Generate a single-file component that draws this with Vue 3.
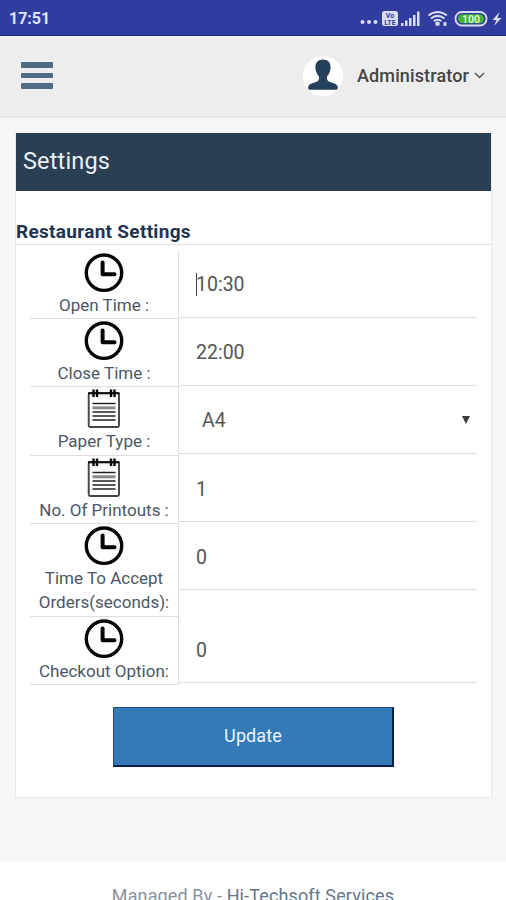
<script setup>
import { ref } from 'vue';

const rows = ref([
  { icon: 'clock', label: 'Open Time :', value: '10:30', focused: true },
  { icon: 'clock', label: 'Close Time :', value: '22:00' },
  { icon: 'paper', label: 'Paper Type :', value: 'A4', select: true },
  { icon: 'paper', label: 'No. Of Printouts :', value: '1' },
  { icon: 'clock', label: 'Time To Accept Orders(seconds):', value: '0', tall: true },
  { icon: 'clock', label: 'Checkout Option:', value: '0' }
]);
</script>

<template>
  <div class="page">
    <div class="status-bar">
      <span class="time">17:51</span>
      <svg class="status-icons" width="146" height="20" viewBox="0 0 146 20">
        <g fill="#d9dcf5">
          <circle cx="2.500" cy="13" r="2" />
          <circle cx="9" cy="13" r="2" />
          <circle cx="15.500" cy="13" r="2" />
          <rect x="22" y="2" width="16" height="15" rx="2.500" />
          <rect x="41" y="14" width="2.500" height="3" />
          <rect x="45" y="11.500" width="2.500" height="5.500" />
          <rect x="49" y="9" width="2.500" height="8" />
          <rect x="53" y="6" width="2.500" height="11" />
          <rect x="57" y="2.500" width="2.500" height="14.500" />
          <circle cx="77.500" cy="14.700" r="2.300" />
          <rect x="83.500" y="13" width="3" height="4" rx="1" />
          <path d="M139.500 3 L132.500 11 H136.500 L134 17 L141.500 9 H137.500 Z" />
        </g>
        <text class="volte" x="30" y="9">Vo</text>
        <text class="volte" x="30" y="15.500">LTE</text>
        <g fill="none" stroke="#d9dcf5" stroke-width="2">
          <path d="M68.500 6.500 Q77.500 -0.500 87 6.500" />
          <path d="M71 9.500 Q77.500 4.200 84.500 9.500" />
          <path d="M73.800 12.300 Q77.500 9.300 81.500 12.300" />
        </g>
        <rect x="95.500" y="3" width="31" height="13.500" rx="6.500" fill="none" stroke="#d9dcf5" stroke-width="1.800" />
        <rect x="98" y="5.300" width="26" height="9" rx="4.500" fill="#43b52f" />
        <text class="battery" x="111" y="13.500">100</text>
      </svg>
    </div>

    <header class="header">
      <div class="menu">
        <span></span>
        <span></span>
        <span></span>
      </div>
      <div class="user">
        <svg class="avatar" width="40" height="40" viewBox="0 0 40 40">
          <circle cx="20" cy="20" r="20" fill="#fff" />
          <path
            fill="#24405a"
            d="M20 3.500 C24.800 3.500 27.600 6.500 27.600 11 C27.600 15 26.300 18 24 20.500 C23.500 23.500 24.500 25.200 27 26 C31.500 27.300 34.700 28.300 34.900 31.500 C34.900 33 34 33.800 32.500 33.800 H7.500 C6 33.800 5.100 33 5.100 31.500 C5.300 28.300 8.500 27.300 13 26 C15.500 25.200 16.500 23.500 16 20.500 C13.700 18 12.400 15 12.400 11 C12.400 6.500 15.200 3.500 20 3.500 Z"
          />
        </svg>
        <span class="user-name">Administrator</span>
        <svg width="11" height="7" viewBox="0 0 11 7">
          <path d="M1 1 L5.500 5.500 L10 1" fill="none" stroke="#555" stroke-width="1.500" />
        </svg>
      </div>
    </header>

    <main class="panel">
      <h2 class="panel-title">Settings</h2>
      <h3 class="section-title">Restaurant Settings</h3>

      <div class="form">
        <div v-for="row in rows" :key="row.label" class="row" :class="{ tall: row.tall }">
          <div class="label">
            <svg v-if="row.icon === 'clock'" width="40" height="40" viewBox="0 0 40 40">
              <circle cx="20" cy="19.700" r="17.700" fill="none" stroke="#050505" stroke-width="3.400" />
              <path
                d="M18.600 9.500 V21.300 H30.500"
                fill="none"
                stroke="#050505"
                stroke-width="4"
                stroke-linecap="round"
                stroke-linejoin="round"
              />
            </svg>
            <svg v-else width="40" height="40" viewBox="0 0 40 40">
              <rect x="4.700" y="4" width="30.300" height="34" rx="1.500" fill="none" stroke="#444" stroke-width="1.900" />
              <path d="M4 4.300 H35.500" stroke="#111" stroke-width="2" />
              <path d="M9.500 0.500 V8 M13 0.500 V8 M27 0.500 V8 M30.500 0.500 V8" stroke="#050505" stroke-width="2.400" />
              <path d="M8.500 14.500 H31.500 M8.500 23 H31.500 M8.500 27 H31.500 M8.500 31 H31.500" stroke="#222" stroke-width="1.500" />
              <path d="M8.500 18.800 H31.500" stroke="#888" stroke-width="3" />
            </svg>
            <span>{{ row.label }}</span>
          </div>
          <div class="field" :class="{ select: row.select }">
            <i v-if="row.focused" class="caret"></i>
            <span>{{ row.value }}</span>
            <svg v-if="row.select" class="arrow" width="8" height="9" viewBox="0 0 8 9">
              <path d="M0 0 H8 L4 8 Z" fill="#3c3c3c" />
            </svg>
          </div>
        </div>
      </div>

      <button class="update">Update</button>
    </main>

    <footer class="footer">Managed By - <span>Hi-Techsoft Services</span></footer>
  </div>
</template>

<style>
body {
  overflow: hidden;
}
</style>

<style scoped>
.page {
  display: flex;
  flex-direction: column;
  height: 900px;
  overflow: hidden;
  background: #f6f6f6;
  font-family: Roboto, "Liberation Sans", sans-serif;
  color: #4b5666;
}

.status-bar {
  display: flex;
  flex: none;
  align-items: center;
  justify-content: space-between;
  box-sizing: border-box;
  height: 36px;
  padding: 2px 0 0 9px;
  background: #303d9f;
  border-bottom: 1px solid #18237f;
}

.time {
  color: #dfe3fa;
  font-size: 16px;
  font-weight: 700;
}

.volte {
  fill: #303d9f;
  font-size: 7px;
  font-weight: 700;
  text-anchor: middle;
}

.battery {
  fill: #d8f5d2;
  font-size: 10.500px;
  font-weight: 700;
  text-anchor: middle;
}

.header {
  display: flex;
  flex: none;
  align-items: center;
  justify-content: space-between;
  box-sizing: border-box;
  height: 82px;
  padding: 0 21px 2px;
  background: #ededed;
  border-top: 1px solid #fafafa;
  border-bottom: 2px solid #e6e6e6;
}

.menu {
  display: flex;
  flex-direction: column;
  gap: 5px;
  width: 32px;
}

.menu span {
  height: 5.500px;
  border-radius: 1px;
  background: #4f6b86;
}

.user {
  display: flex;
  align-items: center;
}

.user-name {
  margin: 0 5px 0 14px;
  color: #454545;
  font-size: 18px;
  font-weight: 500;
  letter-spacing: 0.130px;
}

.panel {
  flex: none;
  box-sizing: border-box;
  width: 477px;
  height: 665px;
  margin: 15px 0 0 15px;
  border: 1px solid #e8e8e8;
  background: #fff;
}

.panel-title {
  height: 58px;
  margin: -1px 0 28px;
  padding-left: 7px;
  background: #2a3f54;
  color: #ecf0f3;
  font-size: 23.500px;
  font-weight: 400;
  letter-spacing: 0.150px;
  line-height: 57px;
}

.section-title {
  height: 25px;
  margin: 0;
  border-bottom: 1.500px solid #e2e2e2;
  color: #22344f;
  font-size: 19px;
  font-weight: 700;
  letter-spacing: 0.300px;
  line-height: 26px;
}

.form {
  padding: 6px 14px 0;
}

.row {
  display: flex;
  align-items: flex-start;
  height: 68.200px;
}

.row.tall {
  height: 93px;
}

.label {
  display: flex;
  flex-direction: column;
  align-items: center;
  flex: none;
  box-sizing: border-box;
  width: 149px;
  height: 100%;
  padding-top: 2px;
  border-right: 1px solid #dedede;
  border-bottom: 1.500px solid #dedede;
  font-size: 17px;
  line-height: 24.500px;
  text-align: center;
}

.label svg {
  flex: none;
}

.field {
  display: flex;
  align-items: center;
  flex: 1;
  box-sizing: border-box;
  height: 66.500px;
  padding: 1.500px 7px 0 17px;
  border-bottom: 1.500px solid #dedede;
  color: #555;
  font-size: 19.500px;
}

.select {
  padding-left: 23px;
}

.caret {
  width: 1px;
  height: 23px;
  margin-right: -1px;
  background: #444;
}

.arrow {
  margin-left: auto;
}

.update {
  display: block;
  box-sizing: border-box;
  width: 281px;
  height: 60px;
  margin: 22px 0 0 97px;
  padding: 0 0 2px;
  border: 1px solid #1d4b7c;
  border-right: 2px solid #081d49;
  border-bottom: 2px solid #081d49;
  background: #337ab7;
  color: #eef5fb;
  font-family: inherit;
  font-size: 18px;
  letter-spacing: 0.100px;
}

.footer {
  flex: none;
  box-sizing: border-box;
  height: 70px;
  margin-top: 63px;
  padding-top: 22px;
  background: #fff;
  color: #8792a0;
  font-size: 18px;
  letter-spacing: 0.130px;
  line-height: 25px;
  text-align: center;
}

.footer span {
  color: #65758a;
}
</style>
